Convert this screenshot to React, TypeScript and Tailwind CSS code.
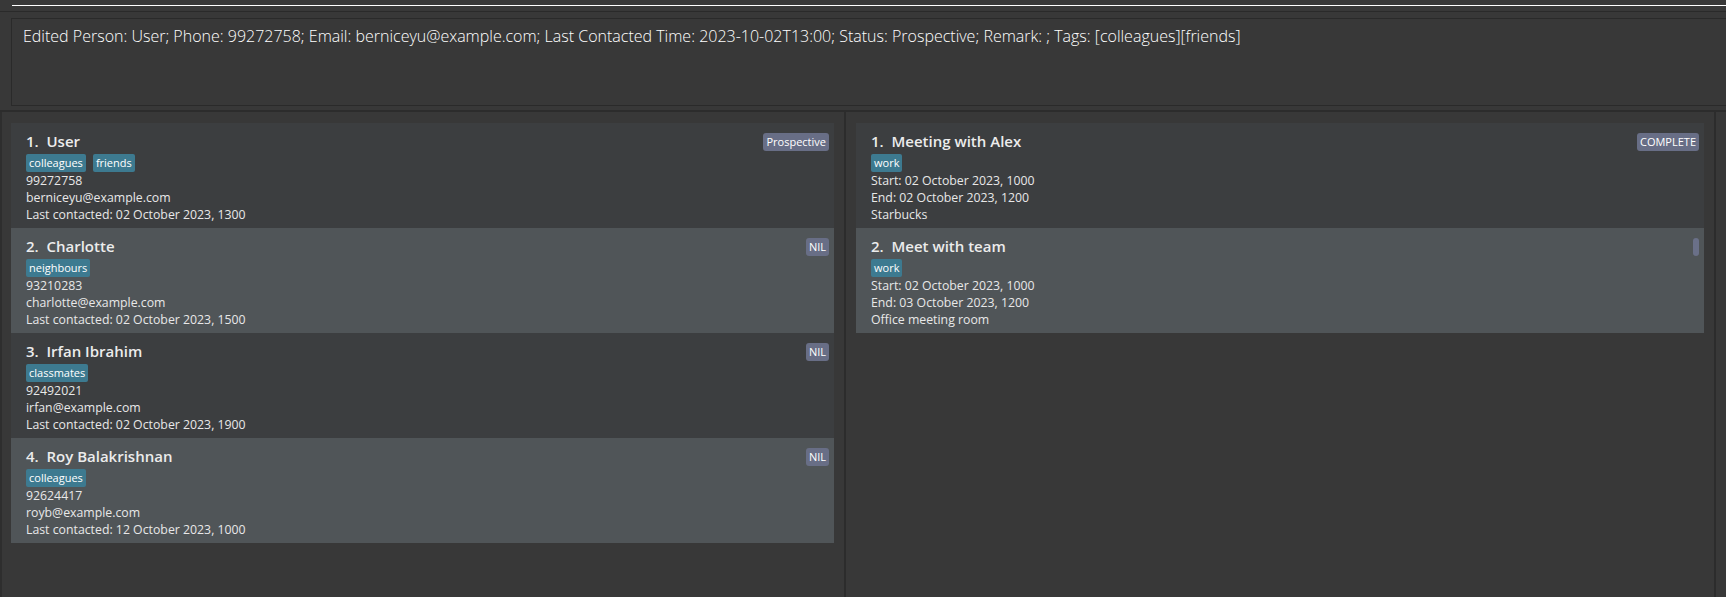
import React from "react";

type Person = {
  idx: number;
  name: string;
  tags: string[];
  lines: string[];
  badge?: string;
};

const persons: Person[] = [
  {
    idx: 1,
    name: "User",
    tags: ["colleagues", "friends"],
    lines: ["99272758", "berniceyu@example.com", "Last contacted: 02 October 2023, 1300"],
    badge: "Prospective",
  },
  {
    idx: 2,
    name: "Charlotte",
    tags: ["neighbours"],
    lines: ["93210283", "charlotte@example.com", "Last contacted: 02 October 2023, 1500"],
    badge: "NIL",
  },
  {
    idx: 3,
    name: "Irfan Ibrahim",
    tags: ["classmates"],
    lines: ["92492021", "irfan@example.com", "Last contacted: 02 October 2023, 1900"],
    badge: "NIL",
  },
  {
    idx: 4,
    name: "Roy Balakrishnan",
    tags: ["colleagues"],
    lines: ["92624417", "royb@example.com", "Last contacted: 12 October 2023, 1000"],
    badge: "NIL",
  },
];

const events: Person[] = [
  {
    idx: 1,
    name: "Meeting with Alex",
    tags: ["work"],
    lines: ["Start: 02 October 2023, 1000", "End: 02 October 2023, 1200", "Starbucks"],
    badge: "COMPLETE",
  },
  {
    idx: 2,
    name: "Meet with team",
    tags: ["work"],
    lines: ["Start: 02 October 2023, 1000", "End: 03 October 2023, 1200", "Office meeting room"],
  },
];

function Card({ p, even, thumb }: { p: Person; even: boolean; thumb?: boolean }) {
  return (
    <div
      className={
        "relative h-[105px] pl-[15px] pt-[7px] " + (even ? "bg-[#505558]" : "bg-[#3c3e40]")
      }
    >
      <div className="h-[22px] whitespace-pre text-[15px] font-semibold leading-[22px] text-[#ececec]">
        {p.idx + ".  " + p.name}
      </div>
      <div className="mt-[2px] flex h-[18px] gap-[7px]">
        {p.tags.map((t) => (
          <span
            key={t}
            className="h-[18px] rounded-[2px] bg-[#3d7a90] px-[3px] text-[11px] leading-[18px] text-white"
          >
            {t}
          </span>
        ))}
      </div>
      {p.lines.map((l, i) => (
        <div key={i} className="h-[17px] text-[12.3px] leading-[17px] text-[#e8e8e8]">
          {l}
        </div>
      ))}
      {p.badge && (
        <span className="absolute right-[5px] top-[10px] h-[18px] rounded-[3px] bg-[#686e86] px-[3px] text-[11px] leading-[18px] text-white">
          {p.badge}
        </span>
      )}
      {thumb && (
        <span className="absolute right-[5px] top-[10px] h-[18px] w-[6px] rounded-[3px] bg-[#6a7088]" />
      )}
    </div>
  );
}

export default function App() {
  return (
    <div
      className="flex h-[597px] w-[1726px] flex-col overflow-hidden bg-[#383838]"
      style={{ fontFamily: '"Open Sans", "Noto Sans", sans-serif' }}
    >
      {/* top strip */}
      <div className="h-[11px] pl-[12px] pt-[5px]">
        <div className="h-px bg-white" />
      </div>
      <div className="h-px bg-[#2a2a2a]" />
      {/* result display */}
      <div className="h-[98px] pl-[11px] pt-[6px]">
        <div className="h-[88px] border border-r-0 border-[#2a2a2a] px-[11px] pt-[6px] text-[16px] font-light leading-[22px] text-white">
          Edited Person: User; Phone: 99272758; Email: berniceyu@example.com; Last Contacted Time:
          2023-10-02T13:00; Status: Prospective; Remark: ; Tags: [colleagues][friends]
        </div>
      </div>
      <div className="h-[2px] bg-[#2c2c2c]" />
      {/* panels */}
      <div className="flex flex-1">
        <div className="w-[844px] border-l-2 border-[#2e2e2e] pl-[9px] pr-[10px] pt-[11px]">
          {persons.map((p, i) => (
            <Card key={p.idx} p={p} even={i % 2 === 1} />
          ))}
        </div>
        <div className="w-[2px] bg-[#2c2c2c]" />
        <div className="w-[868px] px-[10px] pt-[11px]">
          {events.map((p, i) => (
            <Card key={p.idx} p={p} even={i % 2 === 1} thumb={i === 1} />
          ))}
        </div>
        <div className="w-[2px] bg-[#2c2c2c]" />
        <div className="flex-1" />
      </div>
    </div>
  );
}
